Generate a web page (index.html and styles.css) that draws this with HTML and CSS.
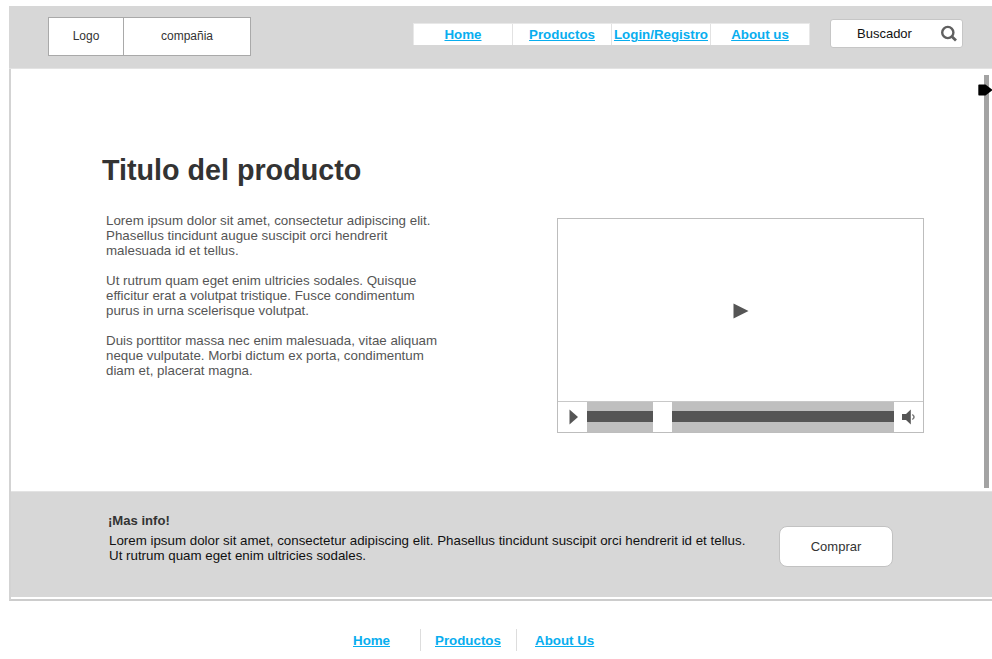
FILE: index.html
```
<!DOCTYPE html>
<html lang="es">
<head>
<meta charset="utf-8">
<title>Titulo del producto</title>
<link rel="stylesheet" href="styles.css">
</head>
<body>
<div class="page">
  <header class="header">
    <div class="brand"><span class="logo">Logo</span><span class="company">compañia</span></div>
    <nav class="nav">
      <a href="#"><span>Home</span></a><a href="#"><span>Productos</span></a><a href="#"><span>Login/Registro</span></a><a href="#"><span>About us</span></a>
    </nav>
    <div class="search">
      <span>Buscador</span>
      <svg width="18" height="18" viewBox="0 0 18 18"><circle cx="7.8" cy="7.5" r="5.6" fill="none" stroke="#606060" stroke-width="2.4"/><path d="M11.8 11.6L16 15.6" stroke="#606060" stroke-width="2.8"/></svg>
    </div>
  </header>
  <main class="main">
    <section class="copy">
      <h1><span>Titulo del producto</span></h1>
      <p><span>Lorem ipsum dolor sit amet, consectetur adipiscing elit.</span><br><span>Phasellus tincidunt augue suscipit orci hendrerit</span><br><span>malesuada id et tellus.</span></p>
      <p><span>Ut rutrum quam eget enim ultricies sodales. Quisque</span><br><span>efficitur erat a volutpat tristique. Fusce condimentum</span><br><span>purus in urna scelerisque volutpat.</span></p>
      <p><span>Duis porttitor massa nec enim malesuada, vitae aliquam</span><br><span>neque vulputate. Morbi dictum ex porta, condimentum</span><br><span>diam et, placerat magna.</span></p>
    </section>
    <section class="player">
      <div class="screen"><svg width="16" height="16" viewBox="0 0 16 16"><path d="M.5 .5L15.5 8L.5 15.5Z" fill="#555"/></svg></div>
      <div class="controls">
        <div class="play"><svg width="10" height="16" viewBox="0 0 10 16"><path d="M.5 .5L9 8L.5 15.5Z" fill="#555"/></svg></div>
        <div class="track played"></div>
        <div class="thumb"></div>
        <div class="track rest"></div>
        <div class="volume"><svg width="15" height="16" viewBox="0 0 15 16"><path d="M1 5H5L9.8 .5V15.5L5 11H1Z" fill="#555"/><path d="M11.3 5.5Q14.8 8 11.3 10.5" fill="none" stroke="#777" stroke-width="1.5"/></svg></div>
      </div>
    </section>
    <div class="scroll"><svg class="marker" width="15" height="12" viewBox="0 0 15 12"><path d="M1 .5H7.5L14.5 6L7.5 11.5H1Q.3 11.5 .3 10.5V1.5Q.3 .5 1 .5Z" fill="#000"/></svg></div>
  </main>
  <section class="info">
    <div class="info-copy">
      <h2><span>¡Mas info!</span></h2>
      <p><span>Lorem ipsum dolor sit amet, consectetur adipiscing elit. Phasellus tincidunt suscipit orci hendrerit id et tellus.</span><br><span>Ut rutrum quam eget enim ultricies sodales.</span></p>
    </div>
    <button class="buy" type="button">Comprar</button>
  </section>
</div>
<footer class="footer">
  <a class="f-home" href="#">Home</a><a class="f-products" href="#">Productos</a><a class="f-about" href="#">About Us</a>
</footer>
</body>
</html>
```
FILE: styles.css
```
* { box-sizing: border-box; }
body {
  margin: 0;
  height: 659px;
  overflow: hidden;
  background: #fff;
  font: 13px/15px "Liberation Sans", Arial, sans-serif;
  color: #333;
}
svg { display: block; flex: none; }
h1, h2, p { margin: 0; white-space: nowrap; }
.page {
  margin: 6px 0 0 9px;
  height: 595px;
  border-left: 2px solid #d3d3d3;
  border-bottom: 2px solid #ccc;
}
.header {
  height: 63px;
  margin-left: -2px;
  padding-left: 39px;
  display: flex;
  align-items: flex-start;
  background: #d7d7d7;
  border-bottom: 1px solid #e3e3e3;
}
.brand {
  display: flex;
  width: 203px;
  height: 39px;
  margin-top: 11px;
  border: 1px solid #a9a9a9;
  background: #fff;
  font-size: 12px;
  line-height: 36px;
  text-align: center;
}
.logo { width: 75px; border-right: 1px solid #a9a9a9; }
.company { flex: 1; }
.nav {
  display: flex;
  width: 397px;
  height: 22px;
  margin: 17px 0 0 162px;
  background: #fff;
  border: 1px solid #e8e8e8;
  border-bottom: 0;
}
.nav a {
  width: 99px;
  height: 21px;
  display: flex;
  justify-content: center;
  line-height: 22px;
  border-left: 1px solid #e2e2e2;
}
.nav a:first-child { width: 98px; border-left: 0; }
.nav a, .footer a {
  color: #08aeef;
  font-size: 13.33px;
  font-weight: bold;
  white-space: nowrap;
}
.search {
  display: flex;
  justify-content: space-between;
  width: 133px;
  height: 29px;
  margin: 13px 0 0 20px;
  padding: 5px 4px 0 26px;
  background: #fff;
  border: 1px solid #c6c6c6;
  border-radius: 3px;
  line-height: 18px;
  color: #111;
}
.main {
  display: flex;
  align-items: flex-start;
  height: 422px;
}
.copy { width: 546px; padding: 82px 0 0 95px; }
.copy h1 {
  height: 62px;
  margin-left: -4px;
  font-size: 28.7px;
  line-height: 38px;
}
.copy p { margin-bottom: 15px; font-size: 13.33px; color: #555; }
.player {
  width: 367px;
  height: 215px;
  margin-top: 149px;
  border: 1px solid #bdbdbd;
}
.screen {
  height: 182px;
  display: flex;
  align-items: center;
  justify-content: center;
  padding-top: 2px;
}
.controls {
  display: flex;
  height: 31px;
  border-top: 1px solid #c8c8c8;
}
.play, .volume {
  width: 29px;
  display: flex;
  align-items: center;
  justify-content: center;
}
.play { padding-left: 2px; }
.volume { flex: 1; }
.track {
  background: linear-gradient(#bfbfbf 9px, #555 9px 20px, #bfbfbf 20px);
}
.played { width: 66px; }
.thumb { width: 19px; }
.rest { width: 222px; }
.scroll {
  position: relative;
  width: 5px;
  height: 413px;
  margin: 6px 0 0 60px;
  background: #a3a3a3;
}
.marker { position: absolute; left: -6px; top: 9px; }
.info {
  display: flex;
  height: 106px;
  background: #d7d7d7;
  border-top: 1px solid #e3e3e3;
}
.info-copy { width: 768px; padding: 21px 0 0 97px; }
.info h2 { height: 20px; font-size: 13.1px; line-height: 15px; }
.info p { margin-left: 1px; font-size: 13.33px; color: #111; }
.buy {
  width: 114px;
  height: 41px;
  margin-top: 34px;
  padding: 0;
  border: 1px solid #c2c2c2;
  border-radius: 8px;
  background: #fff;
  font: inherit;
  color: #333;
}
.footer {
  display: flex;
  height: 22px;
  margin: 28px 0 0 353px;
  line-height: 23px;
}
.f-home { width: 68px; border-right: 1px solid #ddd; }
.f-products { width: 96px; padding-left: 14px; border-right: 1px solid #ddd; }
.f-about { padding-left: 18px; }
```
